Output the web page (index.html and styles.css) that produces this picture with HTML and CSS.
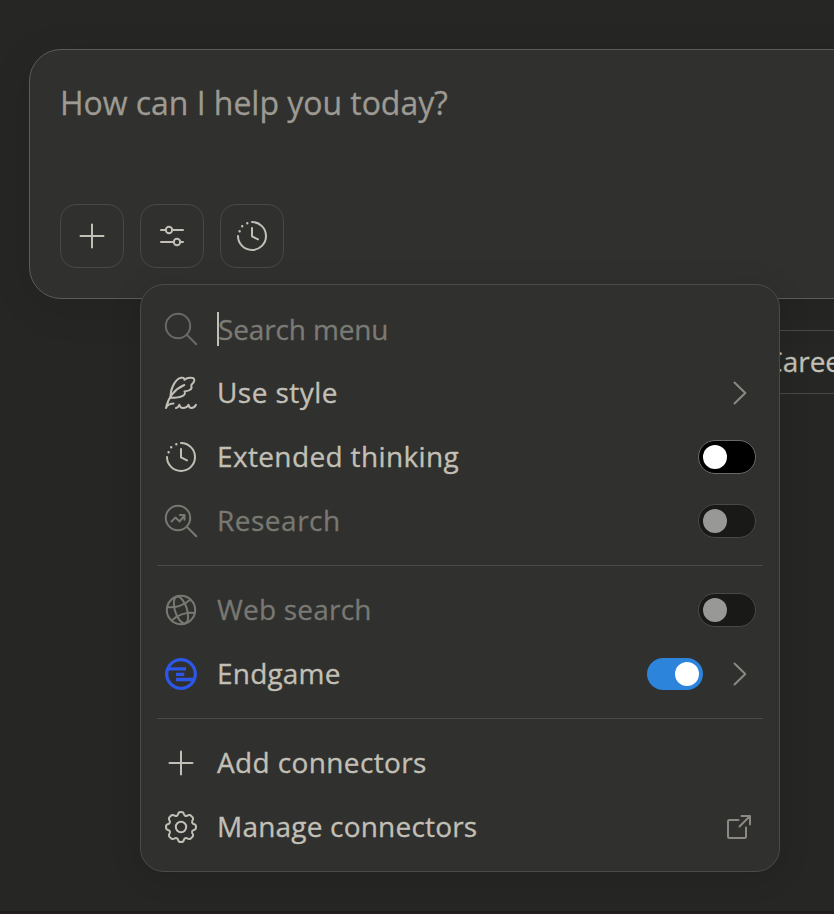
FILE: index.html
```
<!DOCTYPE html>
<html lang="en">

<head>
  <meta charset="UTF-8" />
  <meta name="viewport" content="width=device-width, initial-scale=1.0" />
  <title>New chat</title>
  <link rel="stylesheet" href="styles.css">
</head>

<body>
  <main class="page">
    <section class="composer">
      <p class="composer-placeholder">How can I help you today?</p>
      <div class="composer-tools">
        <button class="tool-button" aria-label="Add">
          <svg class="icon" viewBox="0 0 32 32"><path d="M16 4.5v23M4.5 16h23" /></svg>
        </button>
        <button class="tool-button" aria-label="Tools">
          <svg class="icon" viewBox="0 0 32 32">
            <path d="M5 10h4.800M16.200 10H27M5 22h12.800M24.200 22H27" />
            <circle cx="13" cy="10" r="3.200" />
            <circle cx="21" cy="22" r="3.200" />
          </svg>
        </button>
        <button class="tool-button" aria-label="Extended thinking">
          <svg class="icon" viewBox="0 0 32 32">
            <path d="M16 2A14 14 0 1 1 2 16" />
            <path d="M16 8v8.400l6 3" />
            <path class="dots" d="M3.600 11.200h.01M6.200 6.200h.01M11.300 3.200h.01" />
          </svg>
        </button>
      </div>
    </section>

    <div class="chips">
      <button class="chip">Career</button>
    </div>

    <div class="menu">
      <div class="menu-row search">
        <svg class="icon" viewBox="0 0 32 32"><circle cx="13" cy="13" r="12.200" /><path d="M21.800 21.800L31.300 31.300" /></svg>
        <span class="label label-search">Search menu</span>
      </div>
      <div class="menu-row">
        <svg class="icon" viewBox="0 0 32 32">
          <path d="M5.500 20.800C5.500 17 6 13 7.500 10C9.500 5.500 12.500 1.500 16 .8C18 .4 19.300 1 19.500 2.800C21.500 1 24 .4 26.500 .8C29.500 1 29.800 3 28.800 5C28 6.500 25.800 7.500 26.300 9C27.500 12.500 24.500 13.800 19.500 14.500C21.500 17.500 17.500 20.800 5.500 20.800Z" />
          <path d="M1 31C3 22 9 12.500 19.300 8M1 31C2 28.500 4 26.800 8.500 26.600" />
          <path d="M11 31C12.500 30.800 13.800 29.500 14.300 27.800C15 30 16 31 17.800 31C20.500 31 22.700 29.500 23.500 27.800C24 30 25 31 26.300 31C28.500 31 30.200 29.500 31 27.800" />
        </svg>
        <span class="label label-style">Use style</span>
        <svg class="chevron" viewBox="0 0 14 24"><path d="M1.500 1.500L12.300 12L1.500 22.500" /></svg>
      </div>
      <div class="menu-row">
        <svg class="icon" viewBox="0 0 32 32">
          <path d="M16 2A14 14 0 1 1 2 16" />
          <path d="M16 8v8.400l6 3" />
          <path class="dots" d="M3.600 11.200h.01M6.200 6.200h.01M11.300 3.200h.01" />
        </svg>
        <span class="label label-thinking">Extended thinking</span>
        <span class="toggle"></span>
      </div>
      <div class="menu-row disabled">
        <svg class="icon" viewBox="0 0 32 32">
          <circle cx="13" cy="13" r="12.200" />
          <path d="M21.800 21.800L31.300 31.300M6.500 16.500l4-4 4 4 5-6M14.800 10h4.700v4.700" />
        </svg>
        <span class="label label-research">Research</span>
        <span class="toggle"></span>
      </div>

      <hr class="divider">

      <div class="menu-row disabled">
        <svg class="icon" viewBox="0 0 32 32">
          <circle cx="16" cy="16" r="14.200" />
          <g transform="rotate(-18 16 16)">
            <ellipse cx="16" cy="16" rx="6" ry="14" />
            <path d="M4 9C11 12.500 21 12.500 28 9M4 23C11 19.500 21 19.500 28 23" />
          </g>
        </svg>
        <span class="label label-web">Web search</span>
        <span class="toggle"></span>
      </div>
      <div class="menu-row">
        <svg class="icon endgame" viewBox="0 0 32 32">
          <circle cx="16" cy="16" r="14.300" />
          <path d="M3.500 10.900H21M11 16.300H19.300M11 21.500H28.500" />
        </svg>
        <span class="label label-endgame">Endgame</span>
        <span class="toggle on"></span>
        <svg class="chevron" viewBox="0 0 14 24"><path d="M1.500 1.500L12.300 12L1.500 22.500" /></svg>
      </div>

      <hr class="divider">

      <div class="menu-row">
        <svg class="icon" viewBox="0 0 32 32"><path d="M16 4.500v23M4.500 16h23" /></svg>
        <span class="label label-add">Add connectors</span>
      </div>
      <div class="menu-row">
        <svg class="icon" viewBox="0 0 32 32">
          <path d="M13.300 2.500Q13.600 1 16 1T18.700 2.500Q19.500 5.500 22 4.800Q25 2.700 26.600 5.400Q29.300 7 27.200 10Q26.500 12.500 29.500 13.300Q31 13.600 31 16T29.500 18.700Q26.500 19.500 27.200 22Q29.300 25 26.600 26.600Q25 29.300 22 27.200Q19.500 26.500 18.700 29.500Q18.400 31 16 31T13.300 29.500Q12.500 26.500 10 27.200Q7 29.300 5.400 26.600Q2.700 25 4.800 22Q5.500 19.500 2.500 18.700Q1 18.400 1 16T2.500 13.300Q5.500 12.500 4.800 10Q2.700 7 5.400 5.400Q7 2.700 10 4.800Q12.500 5.500 13.300 2.500Z" />
          <circle cx="16" cy="16" r="5.200" />
        </svg>
        <span class="label label-manage">Manage connectors</span>
        <svg class="external" viewBox="0 0 24 24"><path d="M11.500 5H2.500Q1 5 1 6.500V21.500Q1 23 2.500 23H17.500Q19 23 19 21.500V12.500M14.500 1H23V9.500M23 1L12.500 11.500" /></svg>
      </div>
    </div>
  </main>
</body>

</html>
```
FILE: styles.css
```
* {
  box-sizing: border-box;
}

body {
  margin: 0;
  background: #262624;
  color: #c2c0b6;
  font-family: "Open Sans", sans-serif;
  overflow: hidden;
  -webkit-text-stroke: 0.3px currentColor;
}

.page {
  position: relative;
  height: 914px;
  padding: 49px 0 0 29px;
  overflow: hidden;
  border-bottom: 3px solid #211c1f;
}

.composer {
  width: 1344px;
  height: 250px;
  padding: 30px;
  display: flex;
  flex-direction: column;
  justify-content: space-between;
  background: #30302e;
  border: 1px solid #5c5c58;
  border-radius: 32px;
  box-shadow: 0 8px 40px rgba(0, 0, 0, 0.1);
}

.composer-placeholder {
  margin: 0;
  font-size: 32px;
  line-height: 46px;
  letter-spacing: -0.04px;
  color: #9c9a92;
}

.composer-tools {
  display: flex;
  gap: 16px;
}

.tool-button {
  width: 64px;
  height: 64px;
  padding: 0;
  display: flex;
  align-items: center;
  justify-content: center;
  background: none;
  border: 1px solid #484845;
  border-radius: 16px;
  color: inherit;
}

.icon {
  width: 32px;
  height: 32px;
  flex: none;
  overflow: visible;
}

svg {
  fill: none;
  stroke: currentColor;
  stroke-width: 2;
  stroke-linecap: round;
  stroke-linejoin: round;
}

.dots {
  stroke-width: 2.4;
}

.chips {
  display: flex;
  padding: 31px 0 0 707px;
}

.chip {
  height: 64px;
  padding: 0 28px 2px;
  flex: none;
  background: none;
  border: 1px solid #484845;
  border-radius: 16px;
  color: inherit;
  font: 28px "Open Sans", sans-serif;
  white-space: nowrap;
}

/* dropdown opened from the tools button */
.menu {
  position: absolute;
  top: 284px;
  left: 140px;
  width: 640px;
  padding: 12px 16px;
  background: #30302e;
  border: 1px solid #4b4b48;
  border-radius: 24px;
  box-shadow: 0 4px 32px rgba(0, 0, 0, 0.12);
}

.menu-row {
  height: 64px;
  padding: 0 7px 0 8px;
  display: flex;
  align-items: center;
}

.label {
  margin-left: 20px;
  margin-right: auto;
  padding-bottom: 2px;
  font-size: 28px;
  line-height: 36px;
  white-space: nowrap;
}

.label-search {
  letter-spacing: -0.15px;
}

.label-style {
  letter-spacing: 0.45px;
}

.label-thinking {
  letter-spacing: 0.36px;
}

.label-research {
  letter-spacing: 0.5px;
}

.label-web,
.label-endgame,
.label-manage {
  letter-spacing: 0.2px;
}

.label-add {
  letter-spacing: 0.37px;
}

.search .icon {
  color: #6a6965;
}

/* text caret sits tight against the first letter */
.search .label {
  padding-bottom: 0;
  border-left: 2px solid #c2c0b6;
  line-height: 34px;
  text-indent: -1px;
  color: #7b7a74;
}

.disabled .icon,
.disabled .label {
  color: #797872;
}

.toggle {
  width: 58px;
  height: 34px;
  padding: 4px;
  background: #000;
  border: 1px solid #6a6965;
  border-radius: 17px;
}

.toggle::before {
  content: "";
  display: block;
  width: 24px;
  height: 24px;
  background: #fff;
  border-radius: 50%;
}

.disabled .toggle {
  background: #191917;
  border-color: #484845;
}

.disabled .toggle::before {
  background: #989896;
}

.toggle.on {
  width: 56px;
  height: 32px;
  padding-left: 28px;
  background: #2c84db;
  border: 0;
}

.chevron {
  width: 14px;
  height: 24px;
  margin: 0 9px 0 30px;
  color: #8b8982;
}

.external {
  width: 24px;
  height: 24px;
  margin-right: 5px;
  overflow: visible;
  color: #8b8982;
}

.endgame {
  color: #2c57e8;
  stroke-width: 3.3;
  stroke-linecap: butt;
}

.divider {
  height: 1px;
  margin: 12px 0;
  border: 0;
  background: #4b4b48;
}
```
